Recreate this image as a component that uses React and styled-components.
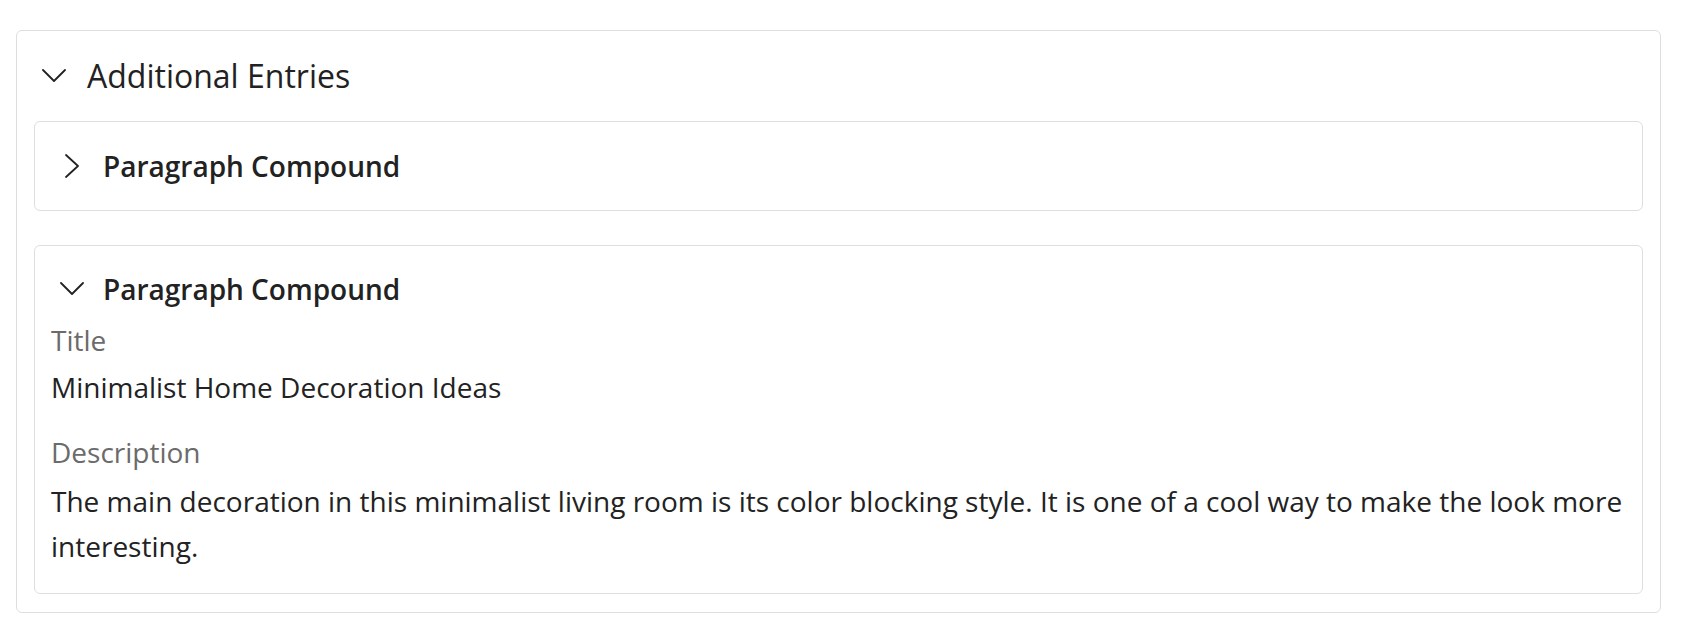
import styled, { createGlobalStyle } from 'styled-components';

const GlobalStyle = createGlobalStyle`
  body {
    margin: 0;
    background: #ffffff;
    font-family: "Open Sans", "Noto Sans", sans-serif;
    color: #222222;
  }
`;

const Chevron = ({ dir = 'down' }) => {
  const points = dir === 'down' ? '1,6 12,17 23,6' : '6,1 18,12 6,23';
  return (
    <ChevronSvg width={24} height={24} viewBox="0 0 24 24" aria-hidden="true">
      <polyline points={points} />
    </ChevronSvg>
  );
};

export default function App() {
  return (
    <>
      <GlobalStyle />
      <Page>
        <Panel>
          <PanelHeader>
            <Chevron dir="down" />
            <PanelTitle>Additional Entries</PanelTitle>
          </PanelHeader>
          <EntryList>
            <Entry>
              <EntryHeader>
                <Chevron dir="right" />
                <EntryTitle>Paragraph Compound</EntryTitle>
              </EntryHeader>
            </Entry>
            <Entry $open>
              <EntryHeader>
                <Chevron dir="down" />
                <EntryTitle>Paragraph Compound</EntryTitle>
              </EntryHeader>
              <Field>
                <Label>Title</Label>
                <Value>Minimalist Home Decoration Ideas</Value>
              </Field>
              <Field>
                <Label>Description</Label>
                <Value $multiline>
                  The main decoration in this minimalist living room is its color blocking style. It is one of a cool way to make the look more interesting.
                </Value>
              </Field>
            </Entry>
          </EntryList>
        </Panel>
      </Page>
    </>
  );
}

const Page = styled.div`
  padding: 30px 31px 28px 16px;
`;

const Panel = styled.section`
  border: 1px solid #dedede;
  border-radius: 6px;
  padding: 0 17px 18px 17px;
`;

const PanelHeader = styled.div`
  height: 90px;
  display: flex;
  align-items: center;
  padding-left: 8px;
  gap: 21px;
`;

const PanelTitle = styled.h2`
  margin: 0;
  font-size: 32px;
  font-weight: 400;
  line-height: 44px;
  color: #222222;
`;

const EntryList = styled.div`
  display: flex;
  flex-direction: column;
  gap: 34px;
`;

const Entry = styled.div`
  border: 1px solid #dedede;
  border-radius: 6px;
  padding: ${(p) => (p.$open ? '25px 14px 24px 16px' : '26px 14px 26px 16px')};
`;

const EntryHeader = styled.div`
  display: flex;
  align-items: center;
  height: 36px;
  padding-left: 9px;
  gap: 19px;
`;

const EntryTitle = styled.h3`
  margin: 0;
  font-size: 28px;
  font-weight: 600;
  line-height: 36px;
  color: #222222;
`;

const ChevronSvg = styled.svg`
  flex: none;
  fill: none;
  stroke: #222222;
  stroke-width: 1.8;
  stroke-linecap: round;
  stroke-linejoin: round;
`;

const Field = styled.div`
  display: flex;
  flex-direction: column;
  margin-top: 15px;
  & + & {
    margin-top: 26px;
  }
`;

const Label = styled.div`
  font-size: 28px;
  line-height: 37px;
  color: #6b6b6b;
`;

const Value = styled.div`
  font-size: 28px;
  line-height: ${(p) => (p.$multiline ? '45px' : '41px')};
  margin-top: 8px;
  color: #222222;
`;
